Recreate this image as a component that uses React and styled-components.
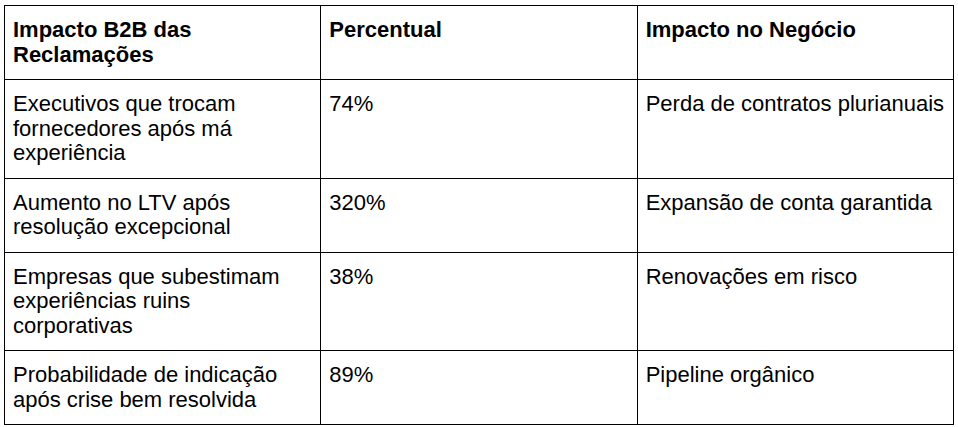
import React from "react";
import styled, { createGlobalStyle } from "styled-components";

const Global = createGlobalStyle`
  html, body { margin: 0; padding: 0; background: #fff; }
  body { font-family: "Liberation Sans", Arial, sans-serif; color: #000; }
`;

const Page = styled.div`
  padding: 5px 4px;
`;

const Table = styled.table`
  width: 950px;
  border-collapse: collapse;
  table-layout: fixed;
  font-family: "Liberation Sans", Arial, sans-serif;
  font-size: 22px;
  line-height: 24.5px;
  color: #000;
`;

const HeadCell = styled.th`
  border: 1px solid #000;
  padding: 12px 8px;
  vertical-align: top;
  text-align: left;
  font-weight: 700;
`;

const BodyCell = styled.td`
  border: 1px solid #000;
  padding: 12px 8px;
  vertical-align: top;
  text-align: left;
  font-weight: 400;
`;

const header = ["Impacto B2B das Reclamações", "Percentual", "Impacto no Negócio"];

const rows = [
  ["Executivos que trocam fornecedores após má experiência", "74%", "Perda de contratos plurianuais"],
  ["Aumento no LTV após resolução excepcional", "320%", "Expansão de conta garantida"],
  ["Empresas que subestimam experiências ruins corporativas", "38%", "Renovações em risco"],
  ["Probabilidade de indicação após crise bem resolvida", "89%", "Pipeline orgânico"],
];

export default function App() {
  return (
    <>
      <Global />
      <Page>
        <Table>
          <thead>
            <tr>
              {header.map((h) => (
                <HeadCell key={h}>{h}</HeadCell>
              ))}
            </tr>
          </thead>
          <tbody>
            {rows.map((r) => (
              <tr key={r[0]}>
                {r.map((c, i) => (
                  <BodyCell key={i}>{c}</BodyCell>
                ))}
              </tr>
            ))}
          </tbody>
        </Table>
      </Page>
    </>
  );
}
